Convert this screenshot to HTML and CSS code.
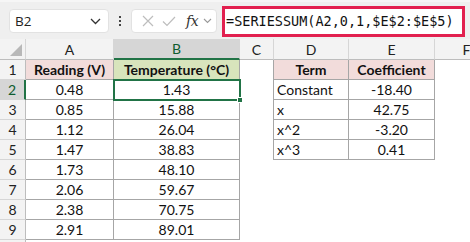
FILE: index.html
```html
<!DOCTYPE html>
<html>
<head>
<meta charset="utf-8">
<link rel="stylesheet" href="styles.css">
</head>
<body>
<div class="app">
  <div class="toolbar">
    <div class="namebox">
      <span class="nb-text">B2</span>
      <svg class="chev" width="11" height="7" viewBox="0 0 11 7"><path d="M1 1 L5.5 5.5 L10 1" fill="none" stroke="#333" stroke-width="1.3"/></svg>
    </div>
    <div class="dots"><span></span><span></span><span></span></div>
    <div class="fxgroup">
      <svg class="ico" width="12" height="12" viewBox="0 0 12 12"><path d="M1 1 L11 11 M11 1 L1 11" stroke="#bdbdbd" stroke-width="1.2" fill="none"/></svg>
      <svg class="ico" width="14" height="11" viewBox="0 0 14 11"><path d="M1 5.5 L5 9.5 L13 1" stroke="#bdbdbd" stroke-width="1.2" fill="none"/></svg>
      <span class="fx">fx</span>
      <svg class="chev2" width="9" height="6" viewBox="0 0 9 6"><path d="M1 1 L4.5 4.5 L8 1" fill="none" stroke="#999" stroke-width="1.1"/></svg>
    </div>
    <div class="formula">=SERIESSUM(A2,0,1,$E$2:$E$5)</div>
  </div>
  <div class="sheet">
    <div class="ch corner"><svg width="12" height="12" viewBox="0 0 12 12"><path d="M12 0 L12 12 L0 12 Z" fill="#b8b8b8"/></svg></div>
    <div class="ch">A</div>
    <div class="ch sel">B</div>
    <div class="ch">C</div>
    <div class="ch">D</div>
    <div class="ch">E</div>
    <div class="ch">F</div>

    <div class="rh">1</div>
    <div class="c b hd pink">Reading (V)</div>
    <div class="c b hd green">Temperature (°C)</div>
    <div class="c bl"></div>
    <div class="c b hd pink">Term</div>
    <div class="c b hd pink">Coefficient</div>
    <div class="c"></div>

    <div class="rh rsel">2</div>
    <div class="c b ctr">0.48</div>
    <div class="c b ctr active">1.43<span class="handle"></span></div>
    <div class="c bl"></div>
    <div class="c b lft">Constant</div>
    <div class="c b ctr">-18.40</div>
    <div class="c"></div>

    <div class="rh">3</div>
    <div class="c b ctr">0.85</div>
    <div class="c b ctr">15.88</div>
    <div class="c bl"></div>
    <div class="c b lft">x</div>
    <div class="c b ctr">42.75</div>
    <div class="c"></div>

    <div class="rh">4</div>
    <div class="c b ctr">1.12</div>
    <div class="c b ctr">26.04</div>
    <div class="c bl"></div>
    <div class="c b lft">x^2</div>
    <div class="c b ctr">-3.20</div>
    <div class="c"></div>

    <div class="rh">5</div>
    <div class="c b ctr">1.47</div>
    <div class="c b ctr">38.83</div>
    <div class="c bl"></div>
    <div class="c b lft">x^3</div>
    <div class="c b ctr">0.41</div>
    <div class="c"></div>

    <div class="rh">6</div>
    <div class="c b ctr">1.73</div>
    <div class="c b ctr">48.10</div>
    <div class="c"></div><div class="c"></div><div class="c"></div><div class="c"></div>

    <div class="rh">7</div>
    <div class="c b ctr">2.06</div>
    <div class="c b ctr">59.67</div>
    <div class="c"></div><div class="c"></div><div class="c"></div><div class="c"></div>

    <div class="rh">8</div>
    <div class="c b ctr">2.38</div>
    <div class="c b ctr">70.75</div>
    <div class="c"></div><div class="c"></div><div class="c"></div><div class="c"></div>

    <div class="rh">9</div>
    <div class="c b ctr">2.91</div>
    <div class="c b ctr">89.01</div>
    <div class="c"></div><div class="c"></div><div class="c"></div><div class="c"></div>

    <div class="rh"></div>
    <div class="c"></div><div class="c"></div><div class="c"></div><div class="c"></div><div class="c"></div><div class="c"></div>
  </div>
</div>
</body>
</html>
```
FILE: styles.css
```css
* { box-sizing: border-box; }
html, body { margin: 0; padding: 0; background: #fff; }
.app { width: 470px; height: 242px; overflow: hidden; font-family: Lato, "Open Sans", sans-serif; }

.toolbar {
  height: 39px;
  background: #efefef;
  border-top: 2px solid #f6f6f6;
  display: flex;
  align-items: center;
  padding-left: 9px;
}
.namebox {
  width: 100px; height: 24px;
  background: #fff;
  border: 1px solid #e2e2e2;
  border-radius: 4px;
  display: flex; align-items: center; justify-content: space-between;
  padding: 0 7px 0 5px;
  margin-top: 1px;
  flex: none;
}
.nb-text { font-family: "Open Sans", sans-serif; font-size: 13.5px; color: #222; }
.dots { width: 22px; display: flex; flex-direction: column; align-items: center; gap: 2px; margin-top: 1px; flex: none; }
.dots span { width: 2px; height: 2px; background: #444; display: block; }
.fxgroup {
  width: 86px; height: 24px;
  background: #fff;
  border: 1px solid #e2e2e2;
  border-radius: 4px;
  display: flex; align-items: center;
  padding-left: 10px;
  gap: 8px;
  margin-top: 1px;
  flex: none;
}
.fx { font-family: "DejaVu Serif", "Liberation Serif", serif; font-style: italic; font-size: 14px; color: #333; margin-left: 2px; letter-spacing: -0.5px; }
.chev2 { margin-left: -3px; }
.formula {
  margin-left: 5px;
  width: 243px; height: 31px;
  border: 3px solid #e2204f;
  background: #fff;
  font-family: "DejaVu Sans Mono", monospace;
  font-size: 13.5px;
  color: #111;
  display: flex; align-items: center;
  padding-left: 1px;
  margin-top: 1px;
  white-space: nowrap;
  flex: none;
}

.sheet {
  display: grid;
  width: 499px;
  grid-template-columns: 26px 88px 126px 34px 75px 86px 64px;
  grid-template-rows: 21px repeat(10, 20px);
  font-size: 14px;
  color: #111;
}
.ch {
  background: #f3f3f3;
  border-right: 1px solid #d6d6d6;
  border-bottom: 1px solid #bdbdbd;
  display: flex; align-items: center; justify-content: center;
  font-family: Lato, sans-serif; font-size: 14px; color: #222;
}
.ch.corner { justify-content: flex-end; align-items: flex-end; padding: 0 3px 3px 0; }
.ch.sel { background: #d6d6d6; border-bottom: 2px solid #217346; color: #0e5c2f; }
.rh {
  background: #f3f3f3;
  border-right: 1px solid #bdbdbd;
  border-bottom: 1px solid #d6d6d6;
  display: flex; align-items: center; justify-content: center;
  font-size: 14px; color: #222;
}
.rh.rsel { background: #d6d6d6; border-right: 2px solid #217346; color: #0e5c2f; }
.c { display: flex; align-items: center; white-space: nowrap; position: relative; }
.b { border-right: 1px solid #a6a6a6; border-bottom: 1px solid #a6a6a6; }
.bl { border-right: 1px solid #a6a6a6; }
.ctr { justify-content: center; }
.lft { padding-left: 3px; }
.hd { font-weight: bold; justify-content: center; }
.pink { background: #f2dcdb; }
.green { background: #d8e4bc; }
.active { outline: 2px solid #217346; outline-offset: -1px; z-index: 2; }
.handle {
  position: absolute; right: -4px; bottom: -4px;
  width: 6px; height: 6px; background: #217346;
  border: 1px solid #fff;
}
```
